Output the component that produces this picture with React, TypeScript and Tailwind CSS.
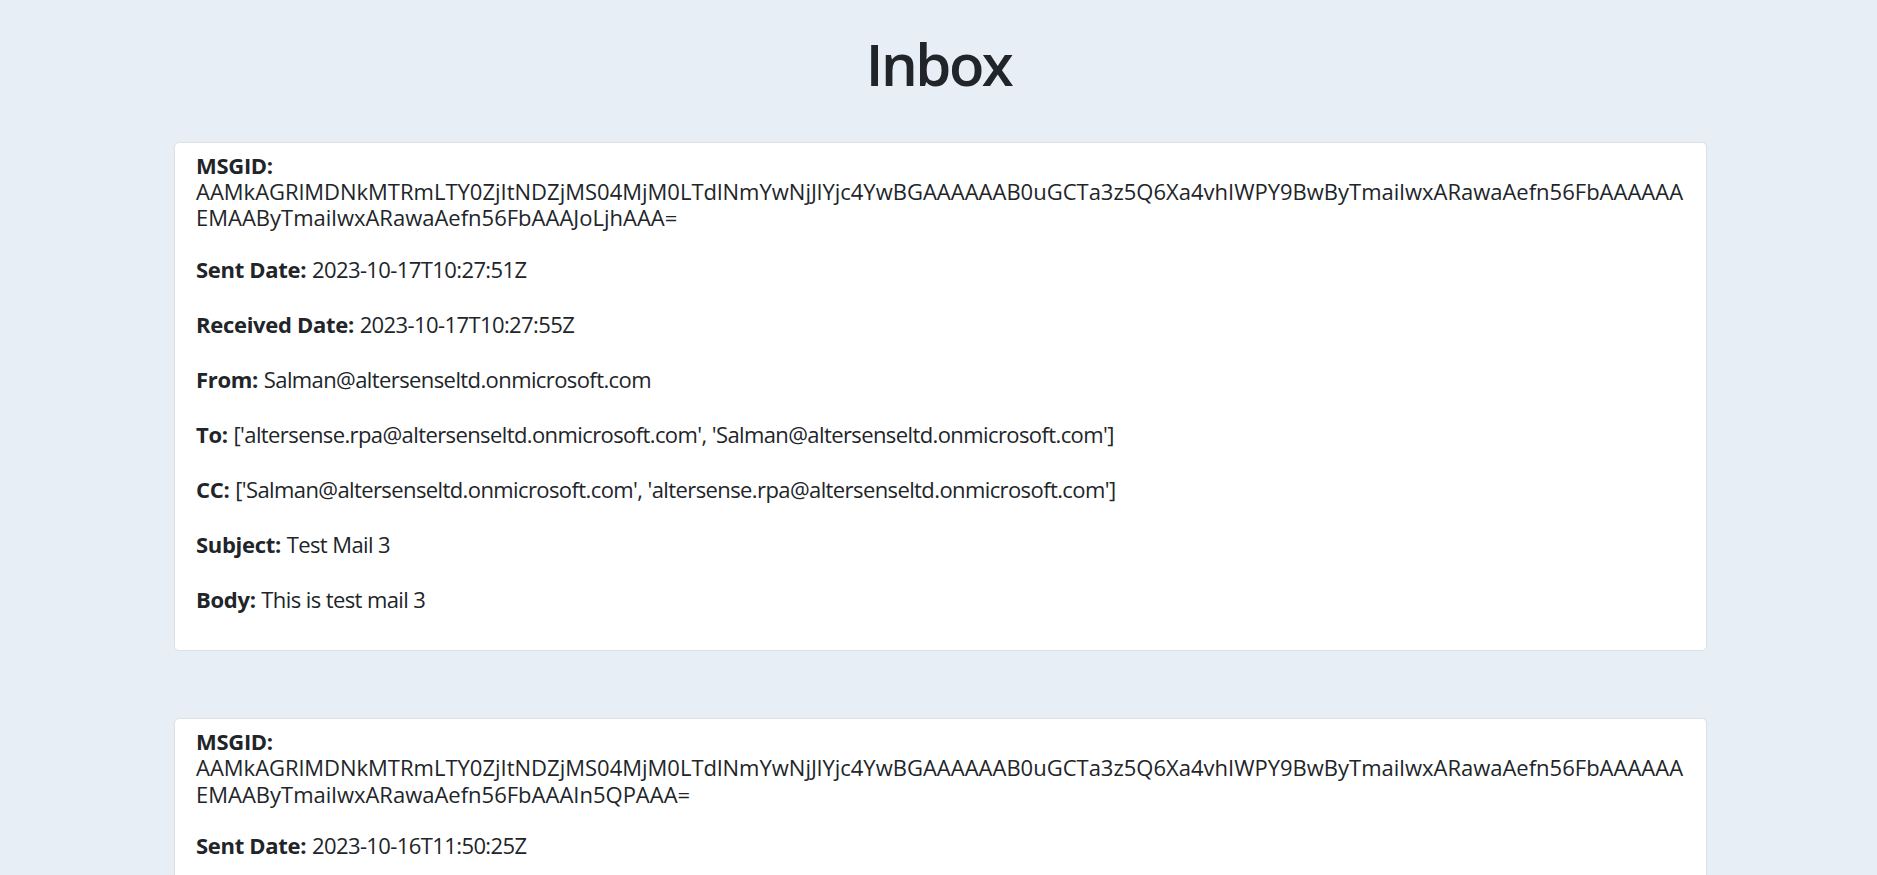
const emails = [
  {
    id: [
      "AAMkAGRlMDNkMTRmLTY0ZjItNDZjMS04MjM0LTdlNmYwNjJlYjc4YwBGAAAAAAB0uGCTa3z5Q6Xa4vhIWPY9BwByTmailwxARawaAefn56FbAAAAAA",
      "EMAAByTmailwxARawaAefn56FbAAAJoLjhAAA=",
    ],
    sent: "2023-10-17T10:27:51Z",
    received: "2023-10-17T10:27:55Z",
    from: "Salman@altersenseltd.onmicrosoft.com",
    to: "['altersense.rpa@altersenseltd.onmicrosoft.com', 'Salman@altersenseltd.onmicrosoft.com']",
    cc: "['Salman@altersenseltd.onmicrosoft.com', 'altersense.rpa@altersenseltd.onmicrosoft.com']",
    subject: "Test Mail 3",
    body: "This is test mail 3",
  },
  {
    id: [
      "AAMkAGRlMDNkMTRmLTY0ZjItNDZjMS04MjM0LTdlNmYwNjJlYjc4YwBGAAAAAAB0uGCTa3z5Q6Xa4vhIWPY9BwByTmailwxARawaAefn56FbAAAAAA",
      "EMAAByTmailwxARawaAefn56FbAAAIn5QPAAA=",
    ],
    sent: "2023-10-16T11:50:25Z",
    received: "2023-10-16T11:50:29Z",
    from: "Salman@altersenseltd.onmicrosoft.com",
    to: "['altersense.rpa@altersenseltd.onmicrosoft.com']",
    cc: "[]",
    subject: "Test Mail 2",
    body: "This is test mail 2",
  },
];

const Field = ({ label, value }: { label: string; value: string }) => (
  <p className="mt-[22px] leading-[33px]">
    <b className="font-bold tracking-[-0.3px]">{label}:</b>{" "}
    <span className="tracking-[-0.6px]">{value}</span>
  </p>
);

const App = () => {
  return (
    <div
      className="min-h-screen bg-[#e7eef5] text-[#212529] pb-16"
      style={{ fontFamily: '"Open Sans", "Noto Sans", sans-serif' }}
    >
      <h1 className="pt-[29px] mb-[43px] text-center text-[58px] leading-[1.2] font-semibold tracking-[-2.5px]">
        Inbox
      </h1>
      <div className="flex flex-col gap-[67px]">
        {emails.map((m, i) => (
          <div
            key={i}
            className="ml-[174px] w-[1533px] bg-white border border-[#dde1e5] rounded-[5px] px-[21px] pt-[9px] pb-[34px] text-[22px]"
          >
            <div className="leading-[26.4px]">
              <div className="font-bold tracking-[-0.3px]">MSGID:</div>
              {m.id.map((line, j) => (
                <div key={j} className="whitespace-nowrap">
                  {line}
                </div>
              ))}
            </div>
            <Field label="Sent Date" value={m.sent} />
            <Field label="Received Date" value={m.received} />
            <Field label="From" value={m.from} />
            <Field label="To" value={m.to} />
            <Field label="CC" value={m.cc} />
            <Field label="Subject" value={m.subject} />
            <Field label="Body" value={m.body} />
          </div>
        ))}
      </div>
    </div>
  );
};

export default App;
